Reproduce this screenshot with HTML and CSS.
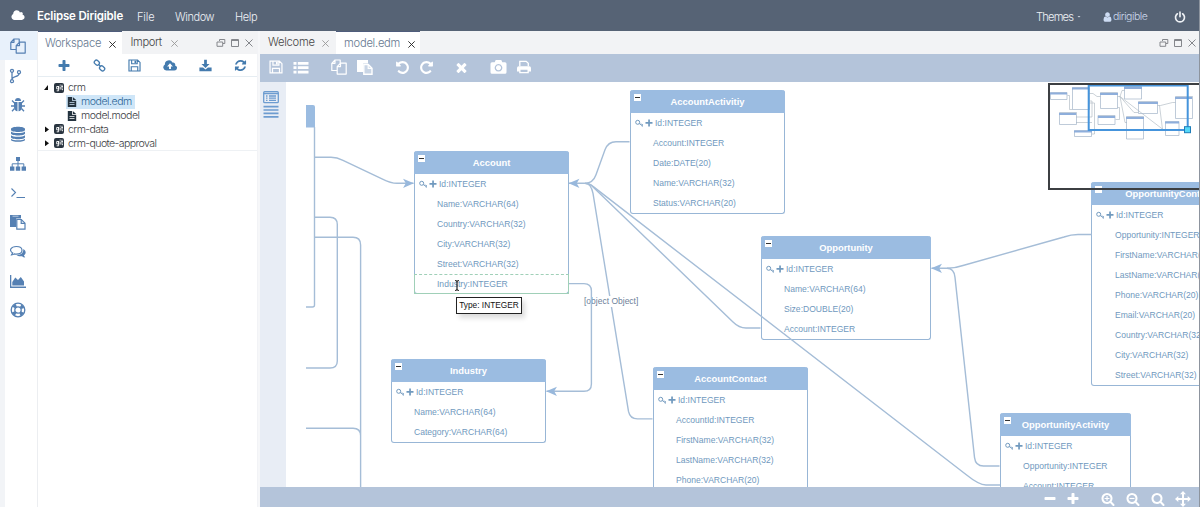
FILE: index.html
```html
<!DOCTYPE html>
<html lang="en">
  <head>
    <meta charset="utf-8">
    <meta name="viewport" content="width=device-width, initial-scale=1.0">
    <title>Eclipse Dirigible</title>
    <link rel="stylesheet" href="styles.css">
  </head>
  <body>
    <svg class="defs">
      <symbol id="plus" viewBox="0 0 1792 1792"><path d="M1600 736v192q0 40-28 68t-68 28h-416v416q0 40-28 68t-68 28h-192q-40 0-68-28t-28-68v-416h-416q-40 0-68-28t-28-68v-192q0-40 28-68t68-28h416v-416q0-40 28-68t68-28h192q40 0 68 28t28 68v416h416q40 0 68 28t28 68z"/></symbol>
      <symbol id="minus" viewBox="0 0 1792 1792"><path d="M1600 736v192q0 40-28 68t-68 28h-1216q-40 0-68-28t-28-68v-192q0-40 28-68t68-28h1216q40 0 68 28t28 68z"/></symbol>
      <symbol id="refresh" viewBox="0 0 1792 1792"><path d="M1639 1056q0 5-1 7-64 268-268 434.500t-478 166.500q-146 0-282.500-55t-243.500-157l-129 129q-19 19-45 19t-45-19-19-45v-448q0-26 19-45t45-19h448q26 0 45 19t19 45-19 45l-137 137q71 66 161 102t187 36q134 0 250-65t186-179q11-17 53-117 8-23 30-23h192q13 0 22.500 9.500t9.500 22.500zm25-800v448q0 26-19 45t-45 19h-448q-26 0-45-19t-19-45 19-45l138-138q-148-137-349-137-134 0-250 65t-186 179q-11 17-53 117-8 23-30 23h-199q-13 0-22.500-9.500t-9.500-22.500v-7q65-268 270-434.500t480-166.500q146 0 284 55.500t245 156.500l130-129q19-19 45-19t45 19 19 45z"/></symbol>
      <symbol id="redo" viewBox="0 0 1792 1792"><path d="M1664 256v448q0 26-19 45t-45 19h-448q-42 0-59-40-17-39 14-69l138-138q-148-137-349-137-104 0-198.500 40.500t-163.500 109.500-109.500 163.500-40.500 198.500 40.500 198.500 109.500 163.500 163.500 109.500 198.500 40.500q119 0 225-52t179-147q7-10 23-12 15 0 25 9l137 138q9 8 9.500 20.500t-7.500 22.500q-109 132-264 204.500t-327 72.500q-156 0-298-61t-245-164-164-245-61-298 61-298 164-245 245-164 298-61q147 0 284.500 55.500t244.500 156.500l130-129q29-31 70-14 39 17 39 59z"/></symbol>
      <symbol id="times" viewBox="0 0 1792 1792"><path d="M1490 1322q0 40-28 68l-136 136q-28 28-68 28t-68-28l-294-294-294 294q-28 28-68 28t-68-28l-136-136q-28-28-28-68t28-68l294-294-294-294q-28-28-28-68t28-68l136-136q28-28 68-28t68 28l294 294 294-294q28-28 68-28t68 28l136 136q28 28 28 68t-28 68l-294 294 294 294q28 28 28 68z"/></symbol>
      <symbol id="search" viewBox="0 0 1792 1792"><path d="M1216 832q0-185-131.500-316.500t-316.500-131.500-316.500 131.500-131.500 316.500 131.500 316.500 316.500 131.500 316.500-131.500 131.500-316.500zm512 832q0 52-38 90t-90 38q-54 0-90-38l-343-342q-179 124-399 124-143 0-273.500-55.500t-225-150-150-225-55.500-273.500 55.500-273.500 150-225 225-150 273.500-55.500 273.500 55.500 225 150 150 225 55.500 273.500q0 220-124 399l343 343q37 37 37 90z"/></symbol>
      <symbol id="cloud" viewBox="0 0 2048 1792"><path d="M1984 1152q0 159-112.500 271.500t-271.500 112.500h-1088q-185 0-316.500-131.500t-131.500-316.500q0-132 71-241.500t187-163.500q-2-28-2-43 0-212 150-362t362-150q158 0 286.500 88t187.500 230q70-62 166-62 106 0 181 75t75 181q0 75-41 138 129 30 213 134.500t84 239.500z"/></symbol>
      <symbol id="user" viewBox="0 0 1792 1792"><path d="M1536 1399q0 109-62.500 187t-150.500 78h-854q-88 0-150.500-78t-62.500-187q0-85 8.500-160.500t31.500-152 58.500-131 94-89 134.500-34.500q131 128 313 128t313-128q76 0 134.500 34.500t94 89 58.500 131 31.500 152 8.500 160.500zm-256-887q0 159-112.500 271.500t-271.500 112.500-271.500-112.500-112.500-271.500 112.500-271.500 271.500-112.500 271.500 112.500 112.500 271.500z"/></symbol>
      <symbol id="power" viewBox="0 0 16 16"><g fill="none" stroke="currentColor" stroke-width="2.200" stroke-linecap="round"><path d="M4.500 3.700a6 6 0 1 0 7 0M8 1.500v6"/></g></symbol>
      <symbol id="files" viewBox="0 0 16 16"><g fill="none" stroke="currentColor" stroke-width="1.200" stroke-linejoin="round"><path d="M6.200 11.500H.8V4.300L4 1h5.200v3M4 1v3.300H.8M6.200 7.600 9.500 4.200h5.700v10.900h-9zM9.500 4.200v3.400H6.200"/></g></symbol>
      <symbol id="branch" viewBox="0 0 16 16"><g fill="none" stroke="currentColor" stroke-width="1.300"><circle cx="4" cy="2.800" r="1.500"/><circle cx="4" cy="13.200" r="1.500"/><circle cx="11" cy="4.200" r="1.500"/><path d="M4 4.300v7.400M11 5.700c0 3.500-7 2.500-7 5.500"/></g></symbol>
      <symbol id="bug" viewBox="0 0 16 16"><path d="M5 4a3 3 0 0 1 6 0zM4 5h3.500v9.300C5.500 14.300 4 12.500 4 10zM8.500 5H12v5c0 2.500-1.500 4.300-3.500 4.300z"/><path d="M4.500 6 2 3.500M11.500 6 14 3.500M4 9H1M12 9h3M4.500 11.500 2 14.200M11.500 11.500l2.500 2.700" stroke="currentColor" stroke-width="1.300"/></symbol>
      <symbol id="database" viewBox="0 0 16 16"><path d="M1 3c0-3 14-3 14 0v1c0 2.600-14 2.600-14 0zM1 5.600c2 2 12 2 14 0v2c0 2.600-14 2.600-14 0zM1 9.200c2 2 12 2 14 0v2c0 2.600-14 2.600-14 0zM1 12.800c2 2 12 2 14 0v1c0 2.700-14 2.700-14 0z"/></symbol>
      <symbol id="sitemap" viewBox="0 0 16 16"><path d="M6 1h4v4H6zM0 10.500h4.400v4.200H0zM5.800 10.500h4.400v4.200H5.800zM11.600 10.500H16v4.200h-4.400z"/><path d="M8 5v6M2.200 11V7.800h11.600V11" fill="none" stroke="currentColor"/></symbol>
      <symbol id="terminal" viewBox="0 0 16 16"><path d="M1.500 3.500 5.500 7.500l-4 4M6.500 12.500H15" fill="none" stroke="currentColor" stroke-width="1.100"/></symbol>
      <symbol id="paste" viewBox="0 0 16 16"><path d="M0 1h11v3.500H6.200V13H0z"/><path d="M2.500 2.200h6" stroke="#fff" opacity=".6"/><path d="M6.800 5.500h4.500l3.700 3.700v6H6.800z" fill="var(--hole)" stroke="currentColor" stroke-width="1.200"/><path d="M11.200 5.500v3.800H15" fill="none" stroke="currentColor" stroke-width="1.200"/></symbol>
      <symbol id="paste-solid" viewBox="0 0 16 16"><path d="M0 1h11v3.500H6.200V13H0z"/><path d="M6.800 5.500h4.500l3.700 3.700v6H6.800z" fill="#c9d5e5" stroke="currentColor" stroke-width="1.400"/><path d="M11.200 5.500v3.800H15" fill="none" stroke="currentColor" stroke-width="1.200"/></symbol>
      <symbol id="comments" viewBox="0 0 16 16"><path d="M6.300 2.500c7.600 0 7.600 7.600 0 7.600-.8 0-1.400 0-2-.2-1 .8-1.800 1-2.800 1l1.200-2C-1.500 6.500 1 2.500 6.300 2.500z" fill="none" stroke="currentColor" stroke-width="1.200"/><path d="M13.200 5c3 1.700 3.300 4.600.7 6.200l1.300 2.200c-1.300 0-2.300-.4-3.200-1.200-2.300.4-4.200 0-5.500-1.100 4.700 0 7.300-2.500 6.700-6.100z"/></symbol>
      <symbol id="chart" viewBox="0 0 16 16"><path d="M0 2h1.300v11.500H16V15H0zM2.300 12.500V9l3-4.500L8 7l2.800-3L14 8.500v4z"/></symbol>
      <symbol id="ring" viewBox="0 0 16 16"><g fill="none" stroke="currentColor"><circle cx="8" cy="8" r="6.800" stroke-width="1.300"/><circle cx="8" cy="8" r="3.200" stroke-width="1.300"/><circle cx="8" cy="8" r="5" stroke-width="3" stroke-dasharray="3.200 4.650" stroke-dashoffset="-2.300"/></g></symbol>
      <symbol id="link" viewBox="0 0 16 16"><g fill="none" stroke="currentColor" stroke-width="1.600"><rect x="1.500" y="2" width="6.500" height="5" rx="2.200" transform="rotate(42 4.700 4.500)"/><rect x="8" y="9" width="6.500" height="5" rx="2.200" transform="rotate(42 11.200 11.500)"/><path d="m6.500 6.300 3 3"/></g></symbol>
      <symbol id="save" viewBox="0 0 16 16"><g fill="none" stroke="currentColor" stroke-width="1.400"><path d="M1.200 1.200h10.600l3 3v10.600H1.200zM4.500 1.500v4.300h6.800V1.500M4 14.500V9.500h8v5"/></g><path d="M8 2h2v3H8z"/></symbol>
      <symbol id="upload" viewBox="0 0 16 16"><path fill-rule="evenodd" d="M3.700 13.800A3.700 3.700 0 0 1 2.200 6.900a4.500 4.500 0 0 1 8.600-2.200 2.400 2.400 0 0 1 3 3.200 3 3 0 0 1-.8 5.900zM8 5.500l-3.300 3.600h2.200v3h2.200v-3h2.200z"/></symbol>
      <symbol id="download" viewBox="0 0 16 16"><path d="M6.300 1h3.400v5H13L8 11 3 6h3.300zM.5 10.500H5l3 2.300 3-2.300h4.500V15H.5z"/></symbol>
      <symbol id="list" viewBox="0 0 16 16"><path d="M0 2h3.200v3H0zM4.600 2H16v3H4.600zM0 6.700h3.200v3H0zM4.600 6.700H16v3H4.600zM0 11.400h3.200v3H0zM4.600 11.400H16v3H4.600z"/></symbol>
      <symbol id="camera" viewBox="0 0 16 16"><path fill-rule="evenodd" d="M1.500 3.200h2.700L5.200 1h5.600l1 2.200h2.700q1.500 0 1.500 1.500v8.600q0 1.500-1.500 1.500h-13Q0 14.800 0 13.300V4.700q0-1.500 1.500-1.500zM8 5a3.800 3.800 0 1 0 .01 0zm0 1.300a2.500 2.500 0 1 1-.01 0z"/></symbol>
      <symbol id="print" viewBox="0 0 16 16"><path d="M3.200 7V1.500h7.300l2.400 2.300V7" fill="none" stroke="currentColor" stroke-width="1.500"/><path fill-rule="evenodd" d="M2 7h12q2 0 2 2v4h-2.500v2h-11v-2H0V9q0-2 2-2zm2 4v2.700h8V11z"/></symbol>
      <symbol id="move" viewBox="0 0 16 16"><path d="m8 0 3 3.300H9v3.700h3.700V5L16 8l-3.300 3V9H9v3.700h2L8 16l-3-3.300h2V9H3.300v2L0 8l3.300-3v2H7V3.300H5z"/></symbol>
      <symbol id="git" viewBox="0 0 10 10"><rect width="10" height="10" rx="2"/><path d="M4.600 3.500H2.700v2.400h1.900V3v4.800H2.700M6.200 3.600v3M6.200 1.600v1M8 1.700v5h1M7.400 3.600H9" fill="none" stroke="#fff" stroke-width=".9"/></symbol>
      <symbol id="doc" viewBox="0 0 10 10"><path fill-rule="evenodd" d="M.8 0H5v3.700h4.200V10H.8zM5.800 0l3.400 3H5.800zM2.500 5v.8h5V5zm0 2v.8h5V7z"/></symbol>
      <symbol id="win" viewBox="0 0 10 10"><path d="M3.500 3V1.500h5.300v4H7M1 4h5.700v4.300H1z" fill="none" stroke="currentColor"/></symbol>
      <symbol id="max" viewBox="0 0 10 10"><path d="M1.500 1.500h7v7h-7zM1.500 2.500h7" fill="none" stroke="currentColor"/></symbol>
      <symbol id="close" viewBox="0 0 10 10"><path d="m1.500 1.500 7 7M8.500 1.500l-7 7" fill="none" stroke="currentColor"/></symbol>
      <symbol id="keys" viewBox="0 0 18 8"><g fill="none" stroke="currentColor"><circle cx="2.700" cy="3.300" r="2"/><path d="m4.200 4.500 2.800 2M6 4.500v1M7.300 5v2.700" stroke-width=".9"/></g><path d="M13.200.5h1.700v2.600h2.600v1.700h-2.600v2.700h-1.700V4.800h-2.700V3.100h2.700z"/></symbol>
      <marker id="arrow" viewBox="0 0 10 10" refX="9.500" refY="5" markerWidth="12" markerHeight="11" markerUnits="userSpaceOnUse" orient="auto"><path class="arrow" d="M0 .8 9.800 5 0 9.200 2.500 5z"/></marker>
    </svg>

    <header class="topbar">
      <svg class="i logo"><use href="#cloud"/></svg>
      <strong class="brand">Eclipse Dirigible</strong>
      <nav class="menu"><a class="file">File</a><a class="window">Window</a><a>Help</a></nav>
      <span class="themes">Themes</span><i class="caret"></i>
      <svg class="i usericon"><use href="#user"/></svg>
      <span class="username">dirigible</span>
      <svg class="i power"><use href="#power"/></svg>
    </header>

    <main class="workbench">
      <aside class="sidebar">
        <a class="current"><svg class="i"><use href="#files"/></svg></a>
        <a><svg class="i branch"><use href="#branch"/></svg></a>
        <a><svg class="i"><use href="#bug"/></svg></a>
        <a><svg class="i"><use href="#database"/></svg></a>
        <a><svg class="i"><use href="#sitemap"/></svg></a>
        <a><svg class="i"><use href="#terminal"/></svg></a>
        <a><svg class="i"><use href="#paste"/></svg></a>
        <a><svg class="i"><use href="#comments"/></svg></a>
        <a><svg class="i"><use href="#chart"/></svg></a>
        <a><svg class="i"><use href="#ring"/></svg></a>
      </aside>

      <section class="explorer">
        <div class="tabs">
          <span class="tab workspace active"><b>Workspace</b><svg class="x"><use href="#close"/></svg></span>
          <span class="tab import"><b>Import</b><svg class="x"><use href="#close"/></svg></span>
          <span class="controls"><svg><use href="#win"/></svg><svg><use href="#max"/></svg><svg><use href="#close"/></svg></span>
        </div>
        <div class="actions">
          <svg class="i"><use href="#plus"/></svg>
          <svg class="i"><use href="#link"/></svg>
          <svg class="i"><use href="#save"/></svg>
          <svg class="i wide"><use href="#upload"/></svg>
          <svg class="i"><use href="#download"/></svg>
          <svg class="i"><use href="#refresh"/></svg>
        </div>
        <ul class="tree">
          <li><i class="open"></i><svg><use href="#git"/></svg><span>crm</span></li>
          <li class="child selected"><svg><use href="#doc"/></svg><span>model.edm</span></li>
          <li class="child"><svg><use href="#doc"/></svg><span>model.model</span></li>
          <li><i class="shut"></i><svg><use href="#git"/></svg><span>crm-data</span></li>
          <li><i class="shut"></i><svg><use href="#git"/></svg><span>crm-quote-approval</span></li>
        </ul>
      </section>

      <section class="editor">
        <div class="tabs">
          <span class="tab welcome"><b>Welcome</b><svg class="x"><use href="#close"/></svg></span>
          <span class="tab model active"><b>model.edm</b><svg class="x"><use href="#close"/></svg></span>
          <span class="controls"><svg><use href="#win"/></svg><svg><use href="#max"/></svg><svg><use href="#close"/></svg></span>
        </div>
        <div class="toolbar">
          <svg class="i"><use href="#save"/></svg>
          <svg class="i list"><use href="#list"/></svg>
          <svg class="i copy"><use href="#files"/></svg>
          <svg class="i cut"><use href="#paste-solid"/></svg>
          <svg class="i undo"><use href="#redo"/></svg>
          <svg class="i redo"><use href="#redo"/></svg>
          <svg class="i delete"><use href="#times"/></svg>
          <svg class="i camera"><use href="#camera"/></svg>
          <svg class="i print"><use href="#print"/></svg>
        </div>
        <div class="stage">
          <div class="palette">
            <svg viewBox="0 0 16 27"><g fill="none" stroke="currentColor" stroke-width="1.300"><rect x=".7" y=".7" width="14.600" height="11" rx="1"/><path d="M.7 2.500h14.600M3 5h1.500M6 5h7M3 7.200h1.500M6 7.200h7M3 9.400h1.500M6 9.400h7"/><path d="M.5 15.600h15M.5 19h15M.5 22.400h15M.5 25.800h15" stroke-width="1.700"/></g></svg>
          </div>
          <div class="canvas">
            <div class="entity account">
              <h2>Account<i class="fold"></i></h2>
              <p class="key"><svg><use href="#keys"/></svg>Id:INTEGER</p>
              <p>Name:VARCHAR(64)</p><p>Country:VARCHAR(32)</p><p>City:VARCHAR(32)</p><p>Street:VARCHAR(32)</p>
              <p class="hover">Industry:INTEGER</p>
            </div>
            <div class="entity activity">
              <h2>AccountActivitiy<i class="fold"></i></h2>
              <p class="key"><svg><use href="#keys"/></svg>Id:INTEGER</p>
              <p>Account:INTEGER</p><p>Date:DATE(20)</p><p>Name:VARCHAR(32)</p><p>Status:VARCHAR(20)</p>
            </div>
            <div class="entity industry">
              <h2>Industry<i class="fold"></i></h2>
              <p class="key"><svg><use href="#keys"/></svg>Id:INTEGER</p>
              <p>Name:VARCHAR(64)</p><p>Category:VARCHAR(64)</p>
            </div>
            <div class="entity contact">
              <h2>AccountContact<i class="fold"></i></h2>
              <p class="key"><svg><use href="#keys"/></svg>Id:INTEGER</p>
              <p>AccountId:INTEGER</p><p>FirstName:VARCHAR(32)</p><p>LastName:VARCHAR(32)</p><p>Phone:VARCHAR(20)</p><p></p>
            </div>
            <div class="entity opportunity">
              <h2>Opportunity<i class="fold"></i></h2>
              <p class="key"><svg><use href="#keys"/></svg>Id:INTEGER</p>
              <p>Name:VARCHAR(64)</p><p>Size:DOUBLE(20)</p><p>Account:INTEGER</p>
            </div>
            <div class="entity oppcontact">
              <h2>OpportunityContact<i class="fold"></i></h2>
              <p class="key"><svg><use href="#keys"/></svg>Id:INTEGER</p>
              <p>Opportunity:INTEGER</p><p>FirstName:VARCHAR(32)</p><p>LastName:VARCHAR(32)</p><p>Phone:VARCHAR(20)</p>
              <p>Email:VARCHAR(20)</p><p>Country:VARCHAR(32)</p><p>City:VARCHAR(32)</p><p>Street:VARCHAR(32)</p>
            </div>
            <div class="entity oppactivity">
              <h2>OpportunityActivity<i class="fold"></i></h2>
              <p class="key"><svg><use href="#keys"/></svg>Id:INTEGER</p>
              <p>Opportunity:INTEGER</p><p>Account:INTEGER</p>
            </div>

            <!-- relations, drawn in window coordinates -->
            <svg class="edges" viewBox="286 82 913 405">
              <path class="head" d="M306 105h7q2 0 2 2v20.500h-9z"/>
              <path d="M314.500 127v178q0 2-2 2H306"/>
              <path d="M314.500 157.300H331q6 0 12 3l39 18.500q9 4.500 15 4.500h16.500" marker-end="url(#arrow)"/>
              <path d="M314.500 217.300H330q7.300 0 7.300 7.300V361q0 7-7.300 7H306"/>
              <path d="M314.500 237.300H353q7.600 0 7.600 7.600V487M306 428.300h47q7.600 0 7.600 7.500"/>
              <path d="M629.500 141.800H616q-8 0-11 8l-9 25q-3 8.500-11 8.500h-16" marker-end="url(#arrow)"/>
              <path d="M585 183.400q4 0 7 2.500L733 322q6 6 13 6h14.500"/>
              <path d="M585 183.400q5 0 8 3L966 474.500q13 10.500 20 10.500h14"/>
              <path d="M585 183.400q6 0 8 10l35.500 218q1.500 7.500 9 7.500h15"/>
              <path d="M1091.500 234.500H1078q-7 0-14 2.500l-101 28.500q-8 2.800-16 2.800h-15.500" marker-end="url(#arrow)"/>
              <path d="M947 268.300q7 0 8 9l19.500 180q1 8.700 9 8.700h16"/>
            </svg>
            <span class="edge-label">[object Object]</span>
            <svg class="edges" viewBox="286 82 913 405">
              <path d="M569 283.600h15q7.400 0 7.400 7.400v93q0 7.300-7.400 7.300h-37.500" marker-end="url(#arrow)"/>
              <path class="ibeam" d="M455 280.500q2 0 2 1.500v7q0 1.500-2 1.500M459 280.500q-2 0-2 1.500M459 290.500q-2 0-2-1.500"/>
            </svg>
            <div class="tooltip">Type: INTEGER</div>

            <div class="outline">
              <svg viewBox="1050 85 149 103">
                <path class="wire" d="M1067.500 95.500h2v14h3M1089 93.500h4l4 3h3.500M1089 101h3v16h-16M1089 103h5.500v31h-3M1076 122.500h16M1117.500 96.500h2.500l2-6h2.500M1120 96.500l14 16h4M1120 96.500l43 33M1120 96.500l5 26h2M1117.500 107.500h2v12h-4M1157.500 105.500h3l12-3h3M1159.500 105.500l3 24h3"/>
                <path class="mini" d="M1050.500 92.500h16.500v7h-16.500zM1072.500 87.500h17v22h-17zM1059.500 112.500h17v12h-17zM1074.500 130.500h17v6h-17zM1100.500 92.500h17v16h-17zM1124.500 86.500h17v12.500h-17zM1098 115.500h17v9h-17zM1126.500 116.500h17v22.500h-17zM1138.500 101.500h19v12h-19zM1175.500 96.500h17v22h-17zM1165.500 121.500h13.500v14h-13.500z"/>
                <path class="minihead" d="M1050 92.500h17v2h-17zM1072 87.500h17v2h-17zM1059 113h17v2h-17zM1074 130.500h18v2h-18zM1100 93h18v2h-18zM1124 87h18v2h-18zM1098 116h17v2h-17zM1126 117h18v2h-18zM1138 102h20v2h-20zM1175 97h17v2h-17zM1165 121.500h14v2h-14z"/>
                <rect class="view" x="1088.700" y="85.500" width="99" height="44.500"/>
                <rect class="grip" x="1184.500" y="126.700" width="6" height="6"/>
              </svg>
            </div>
          </div>
        </div>
        <footer class="zoombar">
          <svg class="i"><use href="#minus"/></svg>
          <svg class="i add"><use href="#plus"/></svg>
          <svg class="i in" viewBox="0 0 16 16"><use href="#search"/><path d="M6.900 4.500v5.600M4.100 7.400h5.600" stroke="currentColor" stroke-width="1.300"/></svg>
          <svg class="i out" viewBox="0 0 16 16"><use href="#search"/><path d="M4.100 7.400h5.600" stroke="currentColor" stroke-width="1.300"/></svg>
          <svg class="i fit"><use href="#search"/></svg>
          <svg class="i move"><use href="#move"/></svg>
        </footer>
      </section>
    </main>
  </body>
</html>
```
FILE: styles.css
```css
* { box-sizing: border-box; }
body {
  --hole: #fff;
  margin: 0;
  width: 1200px;
  height: 507px;
  overflow: hidden;
  display: flex;
  flex-direction: column;
  background: #f3f5f7;
  border-right: 1px solid #8d949e;
  font-family: Inter, "Liberation Sans", sans-serif;
  font-weight: 300;
  font-size: 11px;
  color: #444;
}
svg { display: block; flex: none; fill: currentColor; }
.defs { position: absolute; width: 0; height: 0; }
.i { width: 14px; height: 14px; }

/* top bar */
.topbar {
  height: 31px;
  flex: none;
  display: flex;
  align-items: center;
  padding: 2px 13px 0 11px;
  background: #566375;
  color: #eef1f5;
}
.logo { color: #fff; height: 13px; margin-top: -3px; }
.brand {
  width: 88px;
  margin: -2px 0 0 12px;
  font-weight: 600;
  font-size: 11.500px;
  letter-spacing: -.18px;
  white-space: nowrap;
  color: #fff;
}
.menu { display: flex; flex: 1; margin-left: 12px; letter-spacing: -.4px; }
.menu a { width: 60px; }
.menu .file { width: 38px; letter-spacing: -.1px; }
.themes { width: 41px; letter-spacing: -.85px; }
.themes { font-size: 11.200px; }
.caret { width: 4px; height: 2px; background: #ccd3dd; clip-path: polygon(0 0, 100% 0, 50% 100%); }
.usericon { width: 11px; height: 12px; margin-left: 21px; color: #cddcf3; }
.username { width: 61px; margin-left: 0; font-size: 10.500px; letter-spacing: -.5px; color: #ccd9ec; }
.power { width: 12px; height: 12px; }

.workbench { flex: 1; display: flex; min-height: 0; }

/* perspectives */
.sidebar {
  width: 38px;
  flex: none;
  background: #fff;
  border-left: 5px solid #f2f4f7;
  border-right: 1px solid #eceef1;
  color: #5580b3;
}
.sidebar a { height: 29.350px; display: flex; align-items: center; padding-left: 5px; }
.sidebar a.current { background: #e8f1fb; margin-left: -5px; padding-left: 10px; }
.sidebar .i { width: 16px; height: 16px; margin-top: 1px; }
.sidebar .branch { margin-left: -2px; }

/* tab strips */
.tabs { height: 23px; flex: none; display: flex; align-items: stretch; background: #f2f3f5; }
.tab { display: flex; align-items: center; height: 23px; padding: 0 0 2px 8px; }
.tab b { font-weight: 300; font-size: 11.200px; letter-spacing: -.25px; white-space: nowrap; }
.tab .x { width: 9px; height: 9px; margin-top: 4px; color: #999; }
.tab.active { background: #fff; border-top: 1px solid #4f5d7c; padding-bottom: 1px; color: #66788f; }
.tab.active .x { color: #222; }
.workspace { width: 84px; padding-left: 7px; }
.workspace b { width: 63px; }
.import { width: 95px; padding-left: 9px; }
.import b { width: 39px; letter-spacing: -.4px; }
.welcome { width: 76px; }
.welcome b { width: 53px; }
.model { width: 84px; }
.model b { width: 63px; }
.controls { display: flex; flex: 1; justify-content: flex-end; align-items: center; gap: 4px; padding-right: 3px; color: #85878c; }
.controls svg { width: 10px; height: 10px; }

/* workspace explorer */
.explorer { width: 220px; flex: none; background: #fff; border-right: 1px solid #f2f3f6; }
.actions {
  height: 23px;
  display: flex;
  justify-content: space-between;
  align-items: center;
  padding: 1px 10px 0 19px;
  border-bottom: 1px solid #e6edf2;
  color: #447bae;
}
.actions .i { width: 13px; height: 13px; }
.actions .i:first-child { width: 14px; height: 14px; }
.actions .wide { width: 14px; height: 15px; }
.tree { list-style: none; margin: 0; padding: 4px 0 0 6px; height: 74px; border-bottom: 1px solid #eef1f4; }
.tree li { height: 13.850px; display: flex; align-items: center; }
.tree svg { width: 10px; height: 10px; color: #2a3540; }
.tree li > svg { margin-left: 1px; }
.tree span { margin-left: 4px; font-size: 10.600px; letter-spacing: -.6px; line-height: 13px; color: #3c4045; white-space: nowrap; }
.tree i { width: 9px; height: 6px; background: #111; }
.tree .open { clip-path: polygon(4px 0, 4px 5px, 0 5px); }
.tree .shut { clip-path: polygon(1px 0, 5px 3px, 1px 6px); }
.tree .child { width: max-content; margin-left: 22px; padding-right: 3px; }
.tree .selected { background: #cfe6f8; }
.tree .selected span { color: #2d6797; }
.tree .child span { letter-spacing: -.5px; }
.tree .child svg { color: #24333f; }

/* editor */
.editor { flex: 1; min-width: 0; display: flex; flex-direction: column; border-left: 2px solid #f6f7f9; }
.editor .controls { padding-right: 2px; }
.toolbar {
  height: 28px;
  flex: none;
  display: flex;
  align-items: center;
  padding: 0 0 2px 9px;
  background: #b4c4da;
  color: #fff;
}
.toolbar .list { width: 16px; height: 15px; margin-left: 10px; }
.toolbar .copy { width: 16px; height: 16px; margin-left: 22px; }
.toolbar .cut { width: 16px; height: 16px; margin-left: 10px; }
.toolbar .undo { width: 15px; height: 15px; margin-left: 22px; transform: scaleX(-1); }
.toolbar .redo { width: 15px; height: 15px; margin-left: 9px; }
.toolbar .delete { width: 15px; height: 15px; margin-left: 20px; }
.toolbar .camera { width: 17px; height: 16px; margin-left: 21px; }
.toolbar .print { margin-left: 10px; }
.stage { flex: 1; min-height: 0; display: flex; }
.palette { width: 26px; background: #e8edf5; padding: 9px 0 0 3px; color: #6d9cd0; }
.palette svg { width: 16px; height: 27px; }
.canvas {
  flex: 1;
  position: relative;
  overflow: hidden;
  background: #fff;
  font: 400 8.550px "Liberation Sans", sans-serif;
  color: #7099be;
}
.zoombar {
  height: 20px;
  flex: none;
  display: flex;
  justify-content: flex-end;
  align-items: center;
  padding: 4px 8px 0 0;
  background: #b4c4da;
  color: #fff;
}
.zoombar .add { margin-left: 9px; }
.zoombar .in { margin-left: 21px; }
.zoombar .out, .zoombar .fit { margin-left: 11px; }
.zoombar .move { width: 16px; height: 16px; margin-left: 10px; }

/* diagram */
.entity {
  position: absolute;
  width: 155px;
  background: #fff;
  border: solid #98b6d6;
  border-width: 0 1px 1px;
  border-radius: 3px;
}
.entity h2 {
  position: relative;
  height: 23px;
  margin: 0 -1px;
  background: #9bbce1;
  border-radius: 3px 3px 0 0;
  font-size: 9.400px;
  line-height: 24px;
  text-align: center;
  color: #fff;
}
.entity p { height: 20.050px; margin: 0; padding-left: 22px; line-height: 21px; white-space: nowrap; }
.entity .key { display: flex; align-items: center; padding-left: 4px; }
.entity .key svg { width: 18px; height: 8px; margin-right: 2px; }
.fold { position: absolute; left: 4px; top: 4px; width: 7px; height: 7px; background: #fff; }
.fold::after { content: ""; display: block; width: 5px; height: 1px; margin: 3px 1px; background: #333; }
.entity .hover { margin: 0 -1px -1px; padding-left: 22px; border: 1px solid #a0d0b8; border-top-style: dashed; line-height: 19px; }
.account { left: 128px; top: 69px; }
.activity { left: 344px; top: 8px; }
.industry { left: 105px; top: 277px; }
.contact { left: 367px; top: 285px; }
.opportunity { left: 475px; top: 154px; width: 170px; }
.oppcontact { left: 805px; top: 100px; width: 157px; }
.oppactivity { left: 714px; top: 331px; width: 131px; }
.oppcontact p { padding-left: 23px; }

.edges { position: absolute; left: 0; top: 0; width: 913px; height: 405px; fill: none; stroke: #a5bdd7; stroke-width: 1.400; }
.edges .head { fill: #9bbce1; stroke: none; }
.arrow { fill: #98b8dc; stroke: none; }
.edges .ibeam { stroke: #222; stroke-width: 1.200; }
.edge-label { position: absolute; left: 298px; top: 214px; background: #fff; font-size: 8.500px; line-height: 11px; color: #6d7f9a; white-space: nowrap; }
.tooltip {
  position: absolute;
  left: 170px;
  top: 215px;
  width: 66px;
  height: 17px;
  border: 1px solid #222;
  background: #fff;
  box-shadow: 3px 4px 5px rgba(0, 0, 0, .14);
  font-size: 8.300px;
  line-height: 15px;
  text-align: center;
  white-space: nowrap;
  color: #111;
}
.outline { position: absolute; left: 762px; top: 1px; width: 153px; height: 107px; border: 2px solid #3c3f42; }
.outline svg { width: 149px; height: 103px; fill: none; }
.wire { stroke: #a8b3be; stroke-width: .6; }
.mini { stroke: #a3b4c8; stroke-width: .7; }
.minihead { fill: #8eaedb; }
.view { stroke: #4594dc; stroke-width: 2; }
.grip { fill: #55d8f8; stroke: #1f7db8; }
```
